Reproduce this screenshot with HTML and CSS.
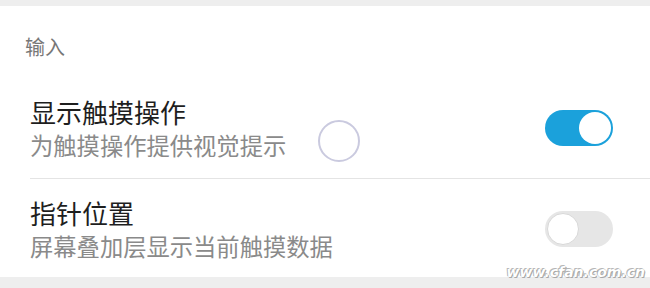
FILE: index.html
```html
<!DOCTYPE html>
<html lang="zh-CN">
<head>
    <meta charset="UTF-8">
    <meta name="viewport" content="width=device-width, initial-scale=1.0">
    <title>输入设置</title>
    <link rel="stylesheet" href="styles.css">
</head>
<body>
    <div class="page">
        <!-- Settings panel -->
        <div class="panel">
            <div class="section-title">输入</div>

            <div class="row">
                <div class="row-text">
                    <div class="row-title">显示触摸操作</div>
                    <div class="row-sub">为触摸操作提供视觉提示</div>
                </div>
                <div class="switch on"><span class="knob"></span></div>
            </div>

            <div class="divider"></div>

            <div class="row">
                <div class="row-text">
                    <div class="row-title">指针位置</div>
                    <div class="row-sub">屏幕叠加层显示当前触摸数据</div>
                </div>
                <div class="switch"><span class="knob"></span></div>
            </div>
        </div>

        <!-- touch indicator shown over the list -->
        <div class="touch-dot"></div>

        <div class="watermark">www.cfan.com.cn</div>
    </div>
</body>
</html>
```

FILE: styles.css
```css
* {
    box-sizing: border-box;
    margin: 0;
    padding: 0;
}

body {
    font-family: "Noto Sans CJK SC", "Noto Sans", sans-serif;
    background: #eeeeee;
    width: 650px;
    height: 288px;
    overflow: hidden;
}

.page {
    position: relative;
    height: 288px;
    padding-top: 6px;
}

/* Panel */
.panel {
    background: #ffffff;
    height: 271px;
}

.section-title {
    font-size: 20px;
    line-height: 24px;
    color: #777777;
    padding: 29px 0 19px 25px;
}

.row {
    display: flex;
    align-items: center;
    justify-content: space-between;
    padding: 18px 37px 18px 30px;
}

.row-title {
    font-size: 26px;
    line-height: 32px;
    color: #1e1e1e;
}

.row-sub {
    font-size: 23.3px;
    line-height: 30px;
    margin-top: 2px;
    color: #8a8a8a;
}

.divider {
    height: 1px;
    margin-left: 30px;
    background: #e4e4e4;
}

/* Switches */
.switch {
    width: 68px;
    height: 36px;
    border-radius: 18px;
    padding: 2px;
    background: #e6e6e6;
    display: flex;
    justify-content: flex-start;
}

.switch .knob {
    width: 32px;
    height: 32px;
    border-radius: 50%;
    background: #ffffff;
    border: 1px solid #d8d8d8;
}

.switch.on {
    background: #1ba1db;
    justify-content: flex-end;
}

.switch.on .knob {
    border: none;
}

/* Overlays */
.touch-dot {
    position: absolute;
    left: 318px;
    top: 120px;
    width: 42px;
    height: 42px;
    border-radius: 50%;
    border: 2px solid #cacadf;
}

.watermark {
    position: absolute;
    right: 5px;
    bottom: 8px;
    font-family: "DejaVu Sans", sans-serif;
    font-size: 14px;
    font-weight: bold;
    font-style: italic;
    color: #ffffff;
    text-shadow: 0 0 1px #999, 1px 1px 0 #aaa, -1px -1px 0 #bbb;
}
```
